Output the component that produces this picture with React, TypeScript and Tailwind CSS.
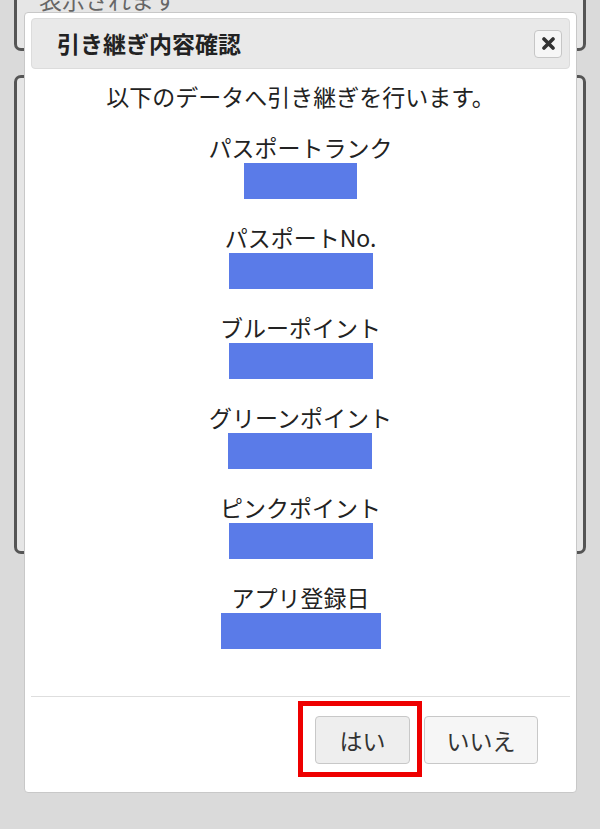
import React from "react";

const items = [
  { label: "パスポートランク", w: "w-[113px]" },
  { label: "パスポートNo.", w: "w-[144px]" },
  { label: "ブルーポイント", w: "w-[144px]" },
  { label: "グリーンポイント", w: "w-[144px]" },
  { label: "ピンクポイント", w: "w-[144px]" },
  { label: "アプリ登録日", w: "w-[160px]" },
];

export default function App() {
  return (
    <div
      className="relative w-[600px] h-[829px] overflow-hidden bg-[#dadada] text-[#222]"
      style={{ fontFamily: '"Noto Sans CJK JP", "Noto Sans", sans-serif' }}
    >
      {/* page behind the dialog */}
      <div className="flex flex-col px-[14px]">
        <div className="h-[51px] border-x-[3px] border-b-[3px] border-[#555] rounded-b-[7px] bg-[#e6e6e6] overflow-hidden">
          <p className="-mt-[16px] pl-[22px] text-[23px] leading-[30px] text-[#666]">表示されます</p>
        </div>
        <div className="mt-[24px] h-[479px] border-[3px] border-[#555] rounded-[7px] bg-[#e6e6e6]" />
      </div>

      {/* dialog */}
      <div className="absolute left-[24px] top-[12px] w-[553px] h-[781px] bg-white border border-[#c8c8c8] rounded-[4px] px-[6px] pt-[5px] flex flex-col">
        <div className="h-[51px] flex items-center justify-between bg-[#e9e9e9] border border-[#dcdcdc] rounded-[4px] pl-[25px] pr-[7px]">
          <h2 className="text-[23px] font-bold text-[#222]">引き継ぎ内容確認</h2>
          <button className="w-[28px] h-[28px] flex items-center justify-center bg-[#f6f6f6] border border-[#c6c6c6] rounded-[4px]">
            <svg width="13" height="13" viewBox="0 0 13 13">
              <path d="M2 2 L11 11 M11 2 L2 11" stroke="#333" strokeWidth="3.6" strokeLinecap="round" />
            </svg>
          </button>
        </div>

        <div className="flex flex-col items-center">
          <p className="mt-[14px] text-[23px] leading-[26px]">以下のデータへ引き継ぎを行います。</p>
          {items.map((it) => (
            <div key={it.label} className="mt-[25px] flex flex-col items-center">
              <p className="text-[23px] leading-[26px]">{it.label}</p>
              <div className={`mt-[3px] h-[36px] bg-[#5a7be8] ${it.w}`} />
            </div>
          ))}
        </div>

        <div className="mt-[47px] h-px bg-[#dedede]" />

        <div className="mt-[19px] flex justify-end gap-[14px] pr-[32px]">
          <div className="relative">
            <button className="w-[95px] h-[48px] bg-[#eeeeee] border border-[#c8c8c8] rounded-[4px] text-[23px] text-[#333]">
              はい
            </button>
            <div className="absolute left-[-17px] top-[-15px] w-[124px] h-[76px] border-[5px] border-[#ee0000]" />
          </div>
          <button className="w-[114px] h-[48px] bg-[#f6f6f6] border border-[#c8c8c8] rounded-[4px] text-[23px] text-[#333]">
            いいえ
          </button>
        </div>
      </div>
    </div>
  );
}
